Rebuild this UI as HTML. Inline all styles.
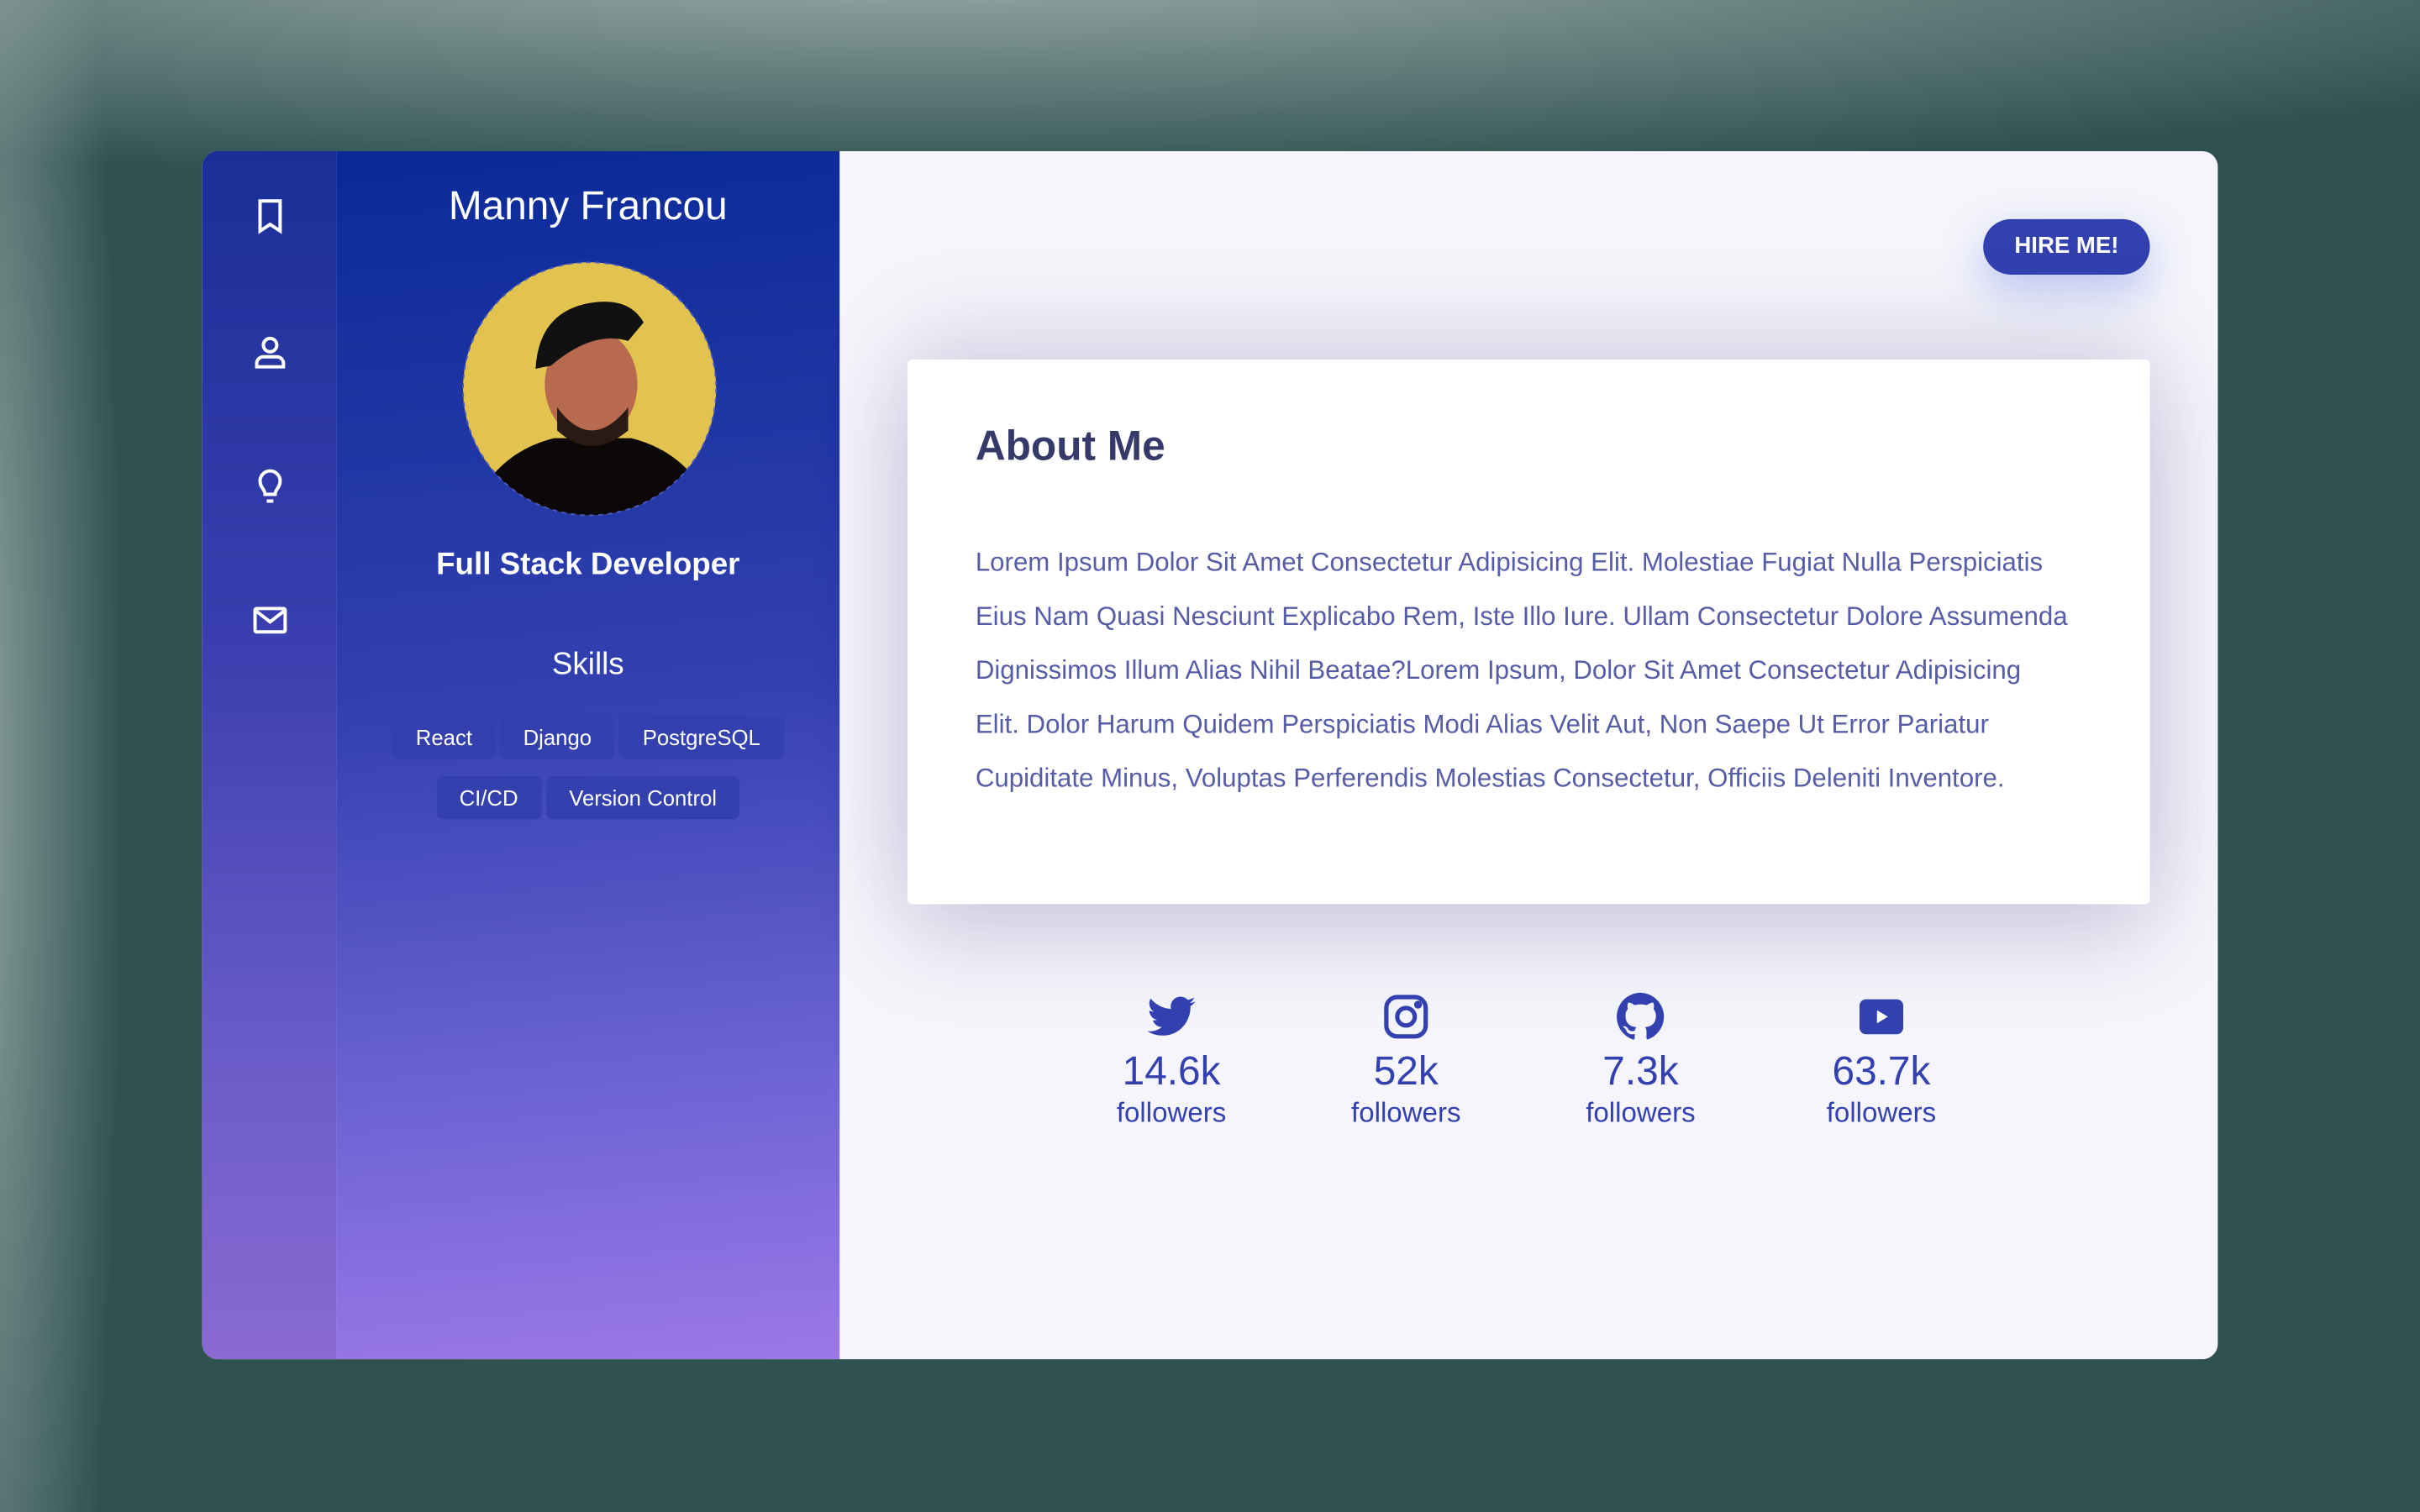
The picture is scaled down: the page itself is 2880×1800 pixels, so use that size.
<!DOCTYPE html>
<html><head><meta charset="utf-8"><style>
html,body{margin:0;padding:0;width:2880px;height:1800px;overflow:hidden;background:#2f5150}
#w{position:absolute;left:0;top:0;width:1568px;height:980px;transform:scale(1.836735);transform-origin:0 0;font-family:"Liberation Sans",sans-serif;
background:radial-gradient(ellipse 1300px 150px at 600px -30px,#9fb0ae 0%,rgba(47,81,80,0) 100%),radial-gradient(ellipse 100px 900px at -20px 500px,#8fa3a1 0%,rgba(47,81,80,0) 100%),#2f5150}
#card{position:absolute;left:131px;top:98px;width:1306px;height:783px;border-radius:10px;overflow:hidden;background:#f5f5fb}
#icons{position:absolute;left:0;top:0;width:87px;height:783px;background:linear-gradient(180deg,#1a2f98 0%,#3a3eae 40%,#6a5cc8 75%,#8a6ad2 100%)}
#left{position:absolute;left:87px;top:0;width:326px;height:783px;background:linear-gradient(175deg,#0a2a98 0%,#3340b0 45%,#6a62d2 75%,#9c78e8 100%);color:#fff;text-align:center}
.ic{position:absolute;left:31px;width:26px;height:26px}
.tag{display:inline-block;background:#3340ae;border-radius:4px;font-size:14px;height:28px;line-height:28px;padding:0 15px;margin:0 1.5px}
#hire{position:absolute;left:1154px;top:44px;width:108px;height:36px;border-radius:18px;background:#3341b0;color:#fff;font-weight:bold;font-size:15px;text-align:center;line-height:36px;box-shadow:0 10px 28px rgba(80,110,230,.35)}
#about{position:absolute;left:457px;top:135px;width:805px;height:353px;background:#fff;border-radius:3px;box-shadow:0 20px 60px rgba(60,60,130,.22),0 -20px 60px rgba(60,60,130,.12)}
#about h2{position:absolute;left:44px;top:41px;margin:0;font-size:27px;color:#363a6a}
#about p{position:absolute;left:44px;top:114px;margin:0;font-size:17px;line-height:35px;color:#575ca6;white-space:nowrap}
.s{position:absolute;top:544px;width:140px;text-align:center;color:#3341b0}
.s svg{width:34px;height:34px;display:block;margin:0 auto}
.s .n{font-size:26px;line-height:32px;margin-top:2px}
.s .f{font-size:18px;line-height:22px}
</style></head><body><div id="w">
<div id="card">
<div id="icons">
<svg class="ic" style="top:29px" viewBox="0 0 24 24" fill="none" stroke="#fff" stroke-width="2"><path d="M6 3h12v18l-6-4-6 4z"/></svg>
<svg class="ic" style="top:117px" viewBox="0 0 24 24" fill="none" stroke="#fff" stroke-width="2"><circle cx="12" cy="8" r="4"/><path d="M4 21v-2a4 4 0 0 1 4-4h8a4 4 0 0 1 4 4v2z"/></svg>
<svg class="ic" style="top:204px" viewBox="0 0 24 24" fill="none" stroke="#fff" stroke-width="2"><path d="M9 17c0-3-3-4-3-8a6 6 0 0 1 12 0c0 4-3 5-3 8z"/><path d="M10 21h4"/></svg>
<svg class="ic" style="top:291px" viewBox="0 0 24 24" fill="none" stroke="#fff" stroke-width="2"><rect x="3" y="5" width="18" height="14" rx="1"/><path d="M3 6l9 7 9-7"/></svg>
</div>
<div id="left">
<div style="position:absolute;left:0;right:0;top:20px;font-size:26px">Manny Francou</div>
<svg style="position:absolute;left:81px;top:71px" width="166" height="166" viewBox="0 0 166 166">
<defs><clipPath id="c"><circle cx="83" cy="83" r="82"/></clipPath></defs>
<circle cx="83" cy="83" r="82" fill="#e2c350"/>
<g clip-path="url(#c)">
<path d="M5 166 Q20 125 60 115 L110 115 Q150 125 165 166z" fill="#0c0808"/>
<ellipse cx="84" cy="80" rx="30" ry="36" fill="#b86a50"/>
<path d="M48 70 Q50 35 80 28 Q108 22 118 40 L108 52 Q85 45 58 68z" fill="#111"/>
<path d="M62 95 Q84 125 108 95 L108 110 Q84 130 62 110z" fill="#2a1a14"/>
</g>
<circle cx="83" cy="83" r="82" fill="none" stroke="#4a5ac0" stroke-dasharray="3 3"/>
</svg>
<div style="position:absolute;left:0;right:0;top:257px;font-size:20px;font-weight:bold">Full Stack Developer</div>
<div style="position:absolute;left:0;right:0;top:322px;font-size:20px">Skills</div>
<div style="position:absolute;left:0;right:0;top:366px"><span class="tag">React</span><span class="tag">Django</span><span class="tag">PostgreSQL</span></div>
<div style="position:absolute;left:0;right:0;top:405px"><span class="tag">CI/CD</span><span class="tag">Version Control</span></div>
</div>
<div id="hire">HIRE ME!</div>
<div id="about"><h2>About Me</h2>
<p>Lorem Ipsum Dolor Sit Amet Consectetur Adipisicing Elit. Molestiae Fugiat Nulla Perspiciatis<br>Eius Nam Quasi Nesciunt Explicabo Rem, Iste Illo Iure. Ullam Consectetur Dolore Assumenda<br>Dignissimos Illum Alias Nihil Beatae?Lorem Ipsum, Dolor Sit Amet Consectetur Adipisicing<br>Elit. Dolor Harum Quidem Perspiciatis Modi Alias Velit Aut, Non Saepe Ut Error Pariatur<br>Cupiditate Minus, Voluptas Perferendis Molestias Consectetur, Officiis Deleniti Inventore.</p></div>
<div class="s" style="left:558px"><svg viewBox="0 0 24 24" fill="#3341b0"><path d="M23 5c-.8.4-1.7.6-2.6.7.9-.6 1.6-1.4 2-2.5-.9.5-1.9.9-2.9 1.1A4.5 4.5 0 0 0 11.8 8.4 12.8 12.8 0 0 1 2.5 3.7a4.5 4.5 0 0 0 1.4 6c-.7 0-1.4-.2-2-.6 0 2.2 1.6 4 3.6 4.4-.7.2-1.4.2-2 .1.6 1.8 2.2 3.1 4.2 3.1A9 9 0 0 1 1 18.6 12.8 12.8 0 0 0 7.9 20.6c8.3 0 12.8-6.9 12.8-12.8v-.6c.9-.6 1.7-1.4 2.3-2.2z"/></svg><div class="n">14.6k</div><div class="f">followers</div></div>
<div class="s" style="left:710px"><svg viewBox="0 0 24 24" fill="none" stroke="#3341b0" stroke-width="2"><rect x="3" y="3" width="18" height="18" rx="5"/><circle cx="12" cy="12" r="4"/><circle cx="17.5" cy="6.5" r=".8" fill="#3341b0"/></svg><div class="n">52k</div><div class="f">followers</div></div>
<div class="s" style="left:862px"><svg viewBox="0 0 24 24" fill="#3341b0"><path d="M12 1a11 11 0 0 0-3.5 21.4c.6.1.8-.2.8-.5v-2c-3 .7-3.7-1.3-3.7-1.3-.5-1.3-1.2-1.6-1.2-1.6-1-.7.1-.7.1-.7 1.1.1 1.7 1.1 1.7 1.1 1 1.7 2.6 1.2 3.2.9.1-.7.4-1.2.7-1.5-2.4-.3-5-1.2-5-5.4 0-1.2.4-2.2 1.1-2.9-.1-.3-.5-1.4.1-2.9 0 0 .9-.3 3 1.1a10 10 0 0 1 5.5 0c2.1-1.4 3-1.1 3-1.1.6 1.5.2 2.6.1 2.9.7.8 1.1 1.7 1.1 2.9 0 4.2-2.6 5.1-5 5.4.4.3.7 1 .7 2v3c0 .3.2.6.8.5A11 11 0 0 0 12 1z"/></svg><div class="n">7.3k</div><div class="f">followers</div></div>
<div class="s" style="left:1018px"><svg viewBox="0 0 24 24"><rect x="2" y="4" width="20" height="16" rx="3" fill="#3341b0"/><path d="M10 9l5 3-5 3z" fill="#fff"/></svg><div class="n">63.7k</div><div class="f">followers</div></div>
</div>
</div></body></html>
